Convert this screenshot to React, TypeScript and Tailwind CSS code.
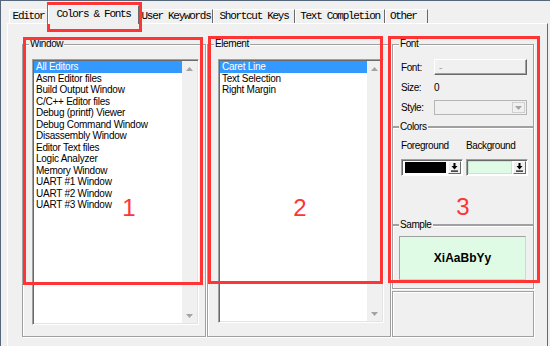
import React from 'react';

const WINDOWS = [
  'All Editors',
  'Asm Editor files',
  'Build Output Window',
  'C/C++ Editor files',
  'Debug (printf) Viewer',
  'Debug Command Window',
  'Disassembly Window',
  'Editor Text files',
  'Logic Analyzer',
  'Memory Window',
  'UART #1 Window',
  'UART #2 Window',
  'UART #3 Window',
];

const ELEMENTS = ['Caret Line', 'Text Selection', 'Right Margin'];

const TABS = [
  { label: 'Editor', cls: 'w-[39px] justify-center' },
  { label: 'Colors & Fonts', cls: 'w-[91px] justify-center', active: true },
  { label: 'User Keywords', cls: 'w-[74px] justify-center' },
  { label: 'Shortcut Keys', cls: 'w-[82px] justify-center' },
  { label: 'Text Completion', cls: 'w-[90px] justify-center' },
  { label: 'Other', cls: 'w-[43px] justify-start pl-[4px]' },
];

const Tri = ({ up }: { up?: boolean }) => (
  <svg width="7" height="4" viewBox="0 0 7 4">
    <path d={up ? 'M0 4h7L3.5 0z' : 'M0 0h7L3.5 4z'} fill="#a3a3a3" />
  </svg>
);

// down arrow onto a bar, used on the colour picker buttons
const DropArrow = () => (
  <svg width="7" height="9" viewBox="0 0 7 9">
    <rect x="2.5" y="0" width="2" height="3" fill="#000" />
    <path d="M0.5 3h6L3.5 6.5z" fill="#000" />
    <rect x="0" y="7.5" width="7" height="1.2" fill="#000" />
  </svg>
);

function Group({ label, className, children }: { label?: string; className: string; children?: React.ReactNode }) {
  return (
    <div className={`relative border border-[#a0a0a0] shadow-[inset_1px_1px_0_#fff,1px_1px_0_#fff] ${className}`}>
      {label && (
        <span className="absolute -top-[7px] left-[6px] px-px bg-[#f0f0f0] text-[10px] leading-[12px] tracking-[-0.4px]">
          {label}
        </span>
      )}
      {children}
    </div>
  );
}

function ListBox({ items, className }: { items: string[]; className: string }) {
  return (
    <div
      className={`flex bg-white p-px border-t border-l border-[#a0a0a0] border-r border-b border-r-white border-b-white shadow-[inset_1px_1px_0_#696969,inset_-1px_-1px_0_#e3e3e3] ${className}`}
    >
      <div className="flex-1 flex flex-col">
        {items.map((it, i) => (
          <div
            key={it}
            className={`h-[11.5px] leading-[11.5px] pl-[2px] text-[10px] tracking-[-0.25px] whitespace-nowrap ${
              i === 0 ? 'bg-[#3399ff] text-white' : 'text-black'
            }`}
          >
            {it}
          </div>
        ))}
      </div>
      <div className="w-[15px] bg-[#f0f0f0] flex flex-col justify-between">
        <div className="h-[15px] flex items-center justify-center">
          <Tri up />
        </div>
        <div className="h-[15px] flex items-center justify-center">
          <Tri />
        </div>
      </div>
    </div>
  );
}

function ColorPick({ swatch, padded }: { swatch: string; padded?: boolean }) {
  return (
    <div className="flex w-[62px] h-[17px] bg-white p-px border-t border-l border-[#a0a0a0] border-r border-b border-r-white border-b-white shadow-[inset_1px_1px_0_#696969]">
      <div className={`flex-1 ${padded ? 'px-[2px] py-px' : 'pr-px'}`}>
        <div className={`h-full ${swatch} ${padded ? '' : 'border border-[#c8e6cf]'}`} />
      </div>
      <div className="w-[13px] flex items-center justify-center bg-[#f0f0f0] border-t border-l border-white border-r border-b border-r-[#696969] border-b-[#696969]">
        <DropArrow />
      </div>
    </div>
  );
}

export default function App() {
  return (
    <div className="relative w-[550px] h-[346px] overflow-hidden bg-[#f0f0f0] border-t border-l border-[#55677a] font-['Liberation_Sans',Arial,sans-serif] text-black">
      {/* Tab strip */}
      <div className="flex items-end h-[22px] pl-[8px] font-['Liberation_Mono','Courier_New',monospace] text-[11px] leading-[11px] tracking-[-1.3px] text-black">
        {TABS.map((t) =>
          t.active ? (
            <div
              key={t.label}
              className={`relative z-10 -mb-px flex h-[19px] pt-[3px] bg-[#f0f0f0] border-t border-l border-white border-r border-r-[#696969] whitespace-nowrap ${t.cls}`}
            >
              {t.label}
            </div>
          ) : (
            <div
              key={t.label}
              className={`flex h-[14px] pt-px border-t border-l border-white border-r border-r-[#696969] whitespace-nowrap ${t.cls}`}
            >
              {t.label}
            </div>
          )
        )}
      </div>

      {/* Tab panel */}
      <div className="ml-[6px] w-[541px] h-[330px] border-t border-l border-white border-r border-r-[#696969] pt-[20px] pl-[14px] flex gap-px">
        <Group label="Window" className="w-[184px] h-[293px] pl-[9px] pt-[14px]">
          <ListBox items={WINDOWS} className="w-[167px] h-[266px]" />
        </Group>

        <Group label="Element" className="w-[184px] h-[293px] pl-[10px] pt-[14px]">
          <ListBox items={ELEMENTS} className="w-[166px] h-[264px]" />
        </Group>

        <div className="w-[142px] flex flex-col text-[10px] tracking-[-0.4px]">
          <Group label="Font" className="h-[83px] pl-[8px] pt-[14px]">
            <div className="flex items-center h-[16px]">
              <span className="w-[33px]">Font:</span>
              <div className="w-[93px] h-[16px] flex items-center pl-[4px] text-[#a0a0a0] bg-[#f0f0f0] border-t border-l border-white border-r border-b border-r-[#696969] border-b-[#696969] shadow-[inset_-1px_-1px_0_#a0a0a0]">
                -
              </div>
            </div>
            <div className="flex items-center h-[14px] mt-[5px]">
              <span className="w-[33px]">Size:</span>
              <span>0</span>
            </div>
            <div className="flex items-center h-[15px] mt-[6px]">
              <span className="w-[33px]">Style:</span>
              <div className="w-[93px] h-[15px] flex justify-end bg-[#f0f0f0] border border-[#b5b5b5] p-px">
                <div className="w-[13px] flex items-center justify-center border border-[#d0d0d0]">
                  <Tri />
                </div>
              </div>
            </div>
          </Group>

          <Group label="Colors" className="h-[98px] pl-[8px] pt-[11px]">
            <div className="flex items-center h-[12px]">
              <span className="w-[65px]">Foreground</span>
              <span>Background</span>
            </div>
            <div className="flex gap-[3px] mt-[8px]">
              <ColorPick swatch="bg-black" padded />
              <ColorPick swatch="bg-[#dffbe5]" />
            </div>
          </Group>

          <Group label="Sample" className="h-[64px] pl-[6px] pt-[10px]">
            <div className="w-[127px] h-[44px] flex items-center justify-center bg-[#dffbe5] border-t border-l border-[#a0a0a0] border-r border-b border-r-[#d4d4d4] border-b-[#d4d4d4] text-[12px] font-bold tracking-normal">
              XiAaBbYy
            </div>
          </Group>

          <Group className="h-[46px] mt-[2px]" />
        </div>
      </div>

      {/* red annotation overlays */}
      <div className="absolute left-[46px] top-[1px] w-[95px] h-[30px] border-[3px] border-[#ff3434]" />
      <div className="absolute left-[22px] top-[36px] w-[180px] h-[248px] border-[3px] border-[#ff3434]" />
      <div className="absolute left-[207px] top-[35px] w-[175px] h-[248px] border-[3px] border-[#ff3434]" />
      <div className="absolute left-[387px] top-[35px] w-[152px] h-[247px] border-[3px] border-[#ff3434]" />
      <div className="absolute left-[113px] top-[195px] w-[30px] text-center text-[24px] leading-none text-[#ff3434]">1</div>
      <div className="absolute left-[284px] top-[195px] w-[30px] text-center text-[24px] leading-none text-[#ff3434]">2</div>
      <div className="absolute left-[447px] top-[194px] w-[30px] text-center text-[24px] leading-none text-[#ff3434]">3</div>
    </div>
  );
}
